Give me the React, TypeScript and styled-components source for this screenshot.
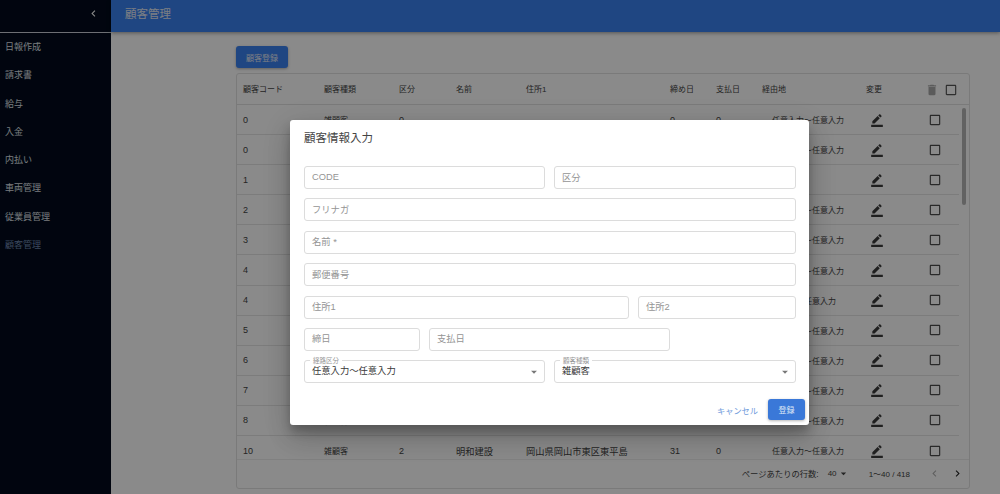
import React from 'react'
import styled, { createGlobalStyle } from 'styled-components'
import { MdArrowDropDown, MdBorderColor, MdCheckBoxOutlineBlank, MdChevronLeft, MdChevronRight, MdDelete } from 'react-icons/md'

const Global = createGlobalStyle`
    html, body { margin: 0; padding: 0; height: 100%; overflow: hidden; }
    body { font-family: 'Liberation Sans', 'Noto Sans CJK JP', sans-serif; background: #fff; }
`

const Page = styled.div`
    position: relative;
    display: flex;
    width: 1000px;
    height: 494px;
    overflow: hidden;
    background: #fff;
`
const Sidebar = styled.nav`
    width: 111px;
    flex: none;
    background: #020b1c;
`
const SideTop = styled.div`
    height: 33px;
    box-sizing: border-box;
    display: flex;
    align-items: center;
    justify-content: flex-end;
    padding-right: 11px;
    padding-bottom: 6px;
    border-bottom: 1px solid #c9ced6;
    color: #fff;
    font-size: 13px;
`
const SideItem = styled.div<{ $active?: boolean }>`
    height: 28.3px;
    line-height: 28.3px;
    padding-left: 5px;
    font-size: 9px;
    color: ${({ $active }) => ($active ? '#6d86ad' : '#dfe2e8')};
`
const Main = styled.div`
    flex: 1;
    display: flex;
    flex-direction: column;
    min-width: 0;
`
const Header = styled.header`
    height: 32px;
    box-sizing: border-box;
    flex: none;
    display: flex;
    align-items: center;
    padding: 0 0 6px 14px;
    background: #3a81f0;
    color: #e4eaf4;
    font-size: 11.5px;
    box-shadow: 0 1px 4px rgba(0, 0, 0, .4);
`
const Content = styled.div`
    flex: 1;
    display: flex;
    flex-direction: column;
    align-items: flex-start;
    padding: 14px 30px 5px 125px;
    gap: 5px;
    min-height: 0;
`
const AddButton = styled.button`
    width: 52px;
    height: 22px;
    border: 0;
    padding: 0;
    border-radius: 3px;
    background: #3a81f0;
    color: #e4eaf4;
    font: inherit;
    font-size: 8px;
    box-shadow: 0 1px 3px rgba(0, 0, 0, .3);
`
const TableCard = styled.div`
    width: 734px;
    flex: 1;
    box-sizing: border-box;
    display: flex;
    flex-direction: column;
    min-height: 0;
    border: 1px solid #e2e2e2;
    border-radius: 3px;
    overflow: hidden;
`
const columns = '81px 75px 57px 70px 144px 46px 46px 98px 34px 1fr'
const HeadRow = styled.div`
    flex: none;
    height: 31px;
    box-sizing: border-box;
    display: grid;
    grid-template-columns: ${columns};
    align-items: center;
    padding: 0 0 2px 6px;
    font-size: 8px;
    color: #444;
    border-bottom: 1px solid #e2e2e2;
`
const HeadEdit = styled.span`
    padding-left: 6px;
`
const HeadTools = styled.div`
    display: flex;
    align-items: center;
    justify-content: flex-end;
    gap: 5px;
    padding: 3px 11px 0 0;
    color: #555;
    font-size: 14px;
`
const TrashIcon = styled(MdDelete)`
    color: #a9a9a9;
    font-size: 14px;
`
const BodyArea = styled.div`
    flex: 1;
    display: flex;
    min-height: 0;
`
const Rows = styled.div`
    flex: 1;
    overflow: hidden;
`
const Gutter = styled.div`
    width: 10px;
    flex: none;
    display: flex;
    justify-content: center;
    padding-top: 3px;
`
const Thumb = styled.div`
    width: 4px;
    height: 97px;
    border-radius: 2px;
    background: #b5b5b5;
`
const Row = styled.div`
    height: 30.1px;
    box-sizing: border-box;
    display: grid;
    grid-template-columns: ${columns};
    align-items: center;
    padding-left: 6px;
    font-size: 8px;
    color: #444;
    border-bottom: 1px solid #e6e6e6;
`
const Num = styled.span`
    font-size: 9px;
`
const NameCell = styled.span`
    font-size: 9.25px;
`
const Via = styled.span<{ $shift?: boolean }>`
    text-align: right;
    padding-right: ${({ $shift }) => ($shift ? '24px' : '16px')};
    white-space: nowrap;
`
const EditIcon = styled(MdBorderColor)`
    font-size: 14px;
    color: #3c3c3c;
    justify-self: center;
`
const RowCheck = styled(MdCheckBoxOutlineBlank)`
    font-size: 14px;
    color: #4c4c4c;
    justify-self: end;
    margin-right: 17px;
`
const Pager = styled.div`
    flex: none;
    height: 29px;
    box-sizing: border-box;
    padding: 0 5px 2px 0;
    display: flex;
    align-items: center;
    justify-content: flex-end;
    font-size: 8px;
    color: #444;
    border-top: 1px solid #ececec;
`
const PagerLabel = styled.span`
    font-size: 8.3px;
`
const PagerCount = styled.span`
    display: flex;
    align-items: center;
    margin-left: 9px;
    margin-right: 10px;
    width: 31px;
`
const PagerNav = styled.span<{ $off?: boolean }>`
    display: flex;
    font-size: 13px;
    margin-left: ${({ $off }) => ($off ? '18px' : '10px')};
    color: ${({ $off }) => ($off ? '#b0b0b0' : '#222')};
`
const Backdrop = styled.div`
    position: absolute;
    inset: 0;
    background: rgba(0, 0, 0, .46);
`
const Modal = styled.div`
    position: absolute;
    left: 290px;
    top: 120px;
    width: 519px;
    height: 305px;
    box-sizing: border-box;
    padding: 0 14px;
    background: #fff;
    border-radius: 3px;
    display: flex;
    flex-direction: column;
    box-shadow: 0 7px 10px rgba(0, 0, 0, .2), 0 15px 24px rgba(0, 0, 0, .14), 0 6px 30px rgba(0, 0, 0, .12);
`
const Title = styled.h2`
    margin: 0;
    height: 46px;
    line-height: 36px;
    font-size: 11.5px;
    font-weight: 400;
    color: #444;
`
const Form = styled.div`
    display: flex;
    flex-direction: column;
    gap: 9.4px;
    width: 492px;
`
const FieldRow = styled.div<{ $cols: string }>`
    display: grid;
    grid-template-columns: ${({ $cols }) => $cols};
    gap: 9px;
`
const Field = styled.div`
    height: 23px;
    box-sizing: border-box;
    display: flex;
    align-items: center;
    padding: 0 0 2px 7px;
    border: 1px solid #dcdcdc;
    border-radius: 3px;
    font-size: 9.3px;
    color: #949494;
`
const SelectBox = styled(Field)`
    position: relative;
    justify-content: space-between;
    padding: 0 3px 4px 7px;
    color: #3a3a3a;
`
const FloatLabel = styled.span`
    position: absolute;
    left: 5px;
    top: -4px;
    padding: 0 3px;
    background: #fff;
    font-size: 6.5px;
    line-height: 7px;
    color: #949494;
`
const Arrow = styled(MdArrowDropDown)`
    font-size: 14px;
    color: #777;
    margin-bottom: -4px;
`
const Actions = styled.div`
    margin-top: auto;
    margin-right: -10px;
    margin-bottom: 5px;
    display: flex;
    justify-content: flex-end;
    align-items: center;
    gap: 10px;
`
const Cancel = styled.span`
    font-size: 8.2px;
    color: #6f9adb;
`
const Submit = styled.button`
    width: 37px;
    height: 21px;
    padding: 0;
    border: 0;
    border-radius: 3px;
    background: #3a78d8;
    color: #dfe8f6;
    font: inherit;
    font-size: 8px;
    box-shadow: 0 1px 3px rgba(0, 0, 0, .3);
`

const menu = ['日報作成', '請求書', '給与', '入金', '内払い', '車両管理', '従業員管理']
const via = '任意入力〜任意入力'
const customers = [
    { code: '0', kind: '雑顧客', div: '0', name: '', addr: '', close: '0', pay: '0', via },
    { code: '0', kind: '雑顧客', div: '0', name: '', addr: '', close: '0', pay: '0', via },
    { code: '1', kind: '雑顧客', div: '0', name: '', addr: '', close: '0', pay: '0', via: '' },
    { code: '2', kind: '雑顧客', div: '0', name: '', addr: '', close: '0', pay: '0', via },
    { code: '3', kind: '雑顧客', div: '0', name: '', addr: '', close: '0', pay: '0', via },
    { code: '4', kind: '雑顧客', div: '0', name: '', addr: '', close: '0', pay: '0', via },
    { code: '4', kind: '雑顧客', div: '0', name: '', addr: '', close: '0', pay: '0', via, shift: true },
    { code: '5', kind: '雑顧客', div: '0', name: '', addr: '', close: '0', pay: '0', via },
    { code: '6', kind: '雑顧客', div: '0', name: '', addr: '', close: '0', pay: '0', via },
    { code: '7', kind: '雑顧客', div: '0', name: '', addr: '', close: '0', pay: '0', via },
    { code: '8', kind: '雑顧客', div: '0', name: '', addr: '', close: '0', pay: '0', via },
    { code: '10', kind: '雑顧客', div: '2', name: '明和建設', addr: '岡山県岡山市東区東平島', close: '31', pay: '0', via },
]

export default function App() {
    return (
        <Page>
            <Global />
            <Sidebar>
                <SideTop><MdChevronLeft /></SideTop>
                {menu.map(m => <SideItem key={m}>{m}</SideItem>)}
                <SideItem $active>顧客管理</SideItem>
            </Sidebar>
            <Main>
                <Header>顧客管理</Header>
                <Content>
                    <AddButton>顧客登録</AddButton>
                    <TableCard>
                        <HeadRow>
                            <span>顧客コード</span>
                            <span>顧客種類</span>
                            <span>区分</span>
                            <span>名前</span>
                            <span>住所1</span>
                            <span>締め日</span>
                            <span>支払日</span>
                            <span>経由地</span>
                            <HeadEdit>変更</HeadEdit>
                            <HeadTools><TrashIcon /><MdCheckBoxOutlineBlank /></HeadTools>
                        </HeadRow>
                        <BodyArea>
                            <Rows>
                                {customers.map((c, i) => (
                                    <Row key={i}>
                                        <Num>{c.code}</Num>
                                        <span>{c.kind}</span>
                                        <Num>{c.div}</Num>
                                        <NameCell>{c.name}</NameCell>
                                        <NameCell>{c.addr}</NameCell>
                                        <Num>{c.close}</Num>
                                        <Num>{c.pay}</Num>
                                        <Via $shift={c.shift}>{c.via}</Via>
                                        <EditIcon />
                                        <RowCheck />
                                    </Row>
                                ))}
                            </Rows>
                            <Gutter><Thumb /></Gutter>
                        </BodyArea>
                        <Pager>
                            <PagerLabel>ページあたりの行数:</PagerLabel>
                            <PagerCount>40<MdArrowDropDown size={13} /></PagerCount>
                            <span>1〜40 / 418</span>
                            <PagerNav $off><MdChevronLeft /></PagerNav>
                            <PagerNav><MdChevronRight /></PagerNav>
                        </Pager>
                    </TableCard>
                </Content>
            </Main>
            <Backdrop />
            <Modal>
                <Title>顧客情報入力</Title>
                <Form>
                    <FieldRow $cols="241px 1fr">
                        <Field>CODE</Field>
                        <Field>区分</Field>
                    </FieldRow>
                    <Field>フリナガ</Field>
                    <Field>名前 *</Field>
                    <Field>郵便番号</Field>
                    <FieldRow $cols="325px 1fr">
                        <Field>住所1</Field>
                        <Field>住所2</Field>
                    </FieldRow>
                    <FieldRow $cols="116px 241px">
                        <Field>締日</Field>
                        <Field>支払日</Field>
                    </FieldRow>
                    <FieldRow $cols="241px 1fr">
                        <SelectBox><FloatLabel>経路区分</FloatLabel>任意入力〜任意入力<Arrow /></SelectBox>
                        <SelectBox><FloatLabel>顧客種類</FloatLabel>雑顧客<Arrow /></SelectBox>
                    </FieldRow>
                </Form>
                <Actions>
                    <Cancel>キャンセル</Cancel>
                    <Submit>登録</Submit>
                </Actions>
            </Modal>
        </Page>
    )
}
